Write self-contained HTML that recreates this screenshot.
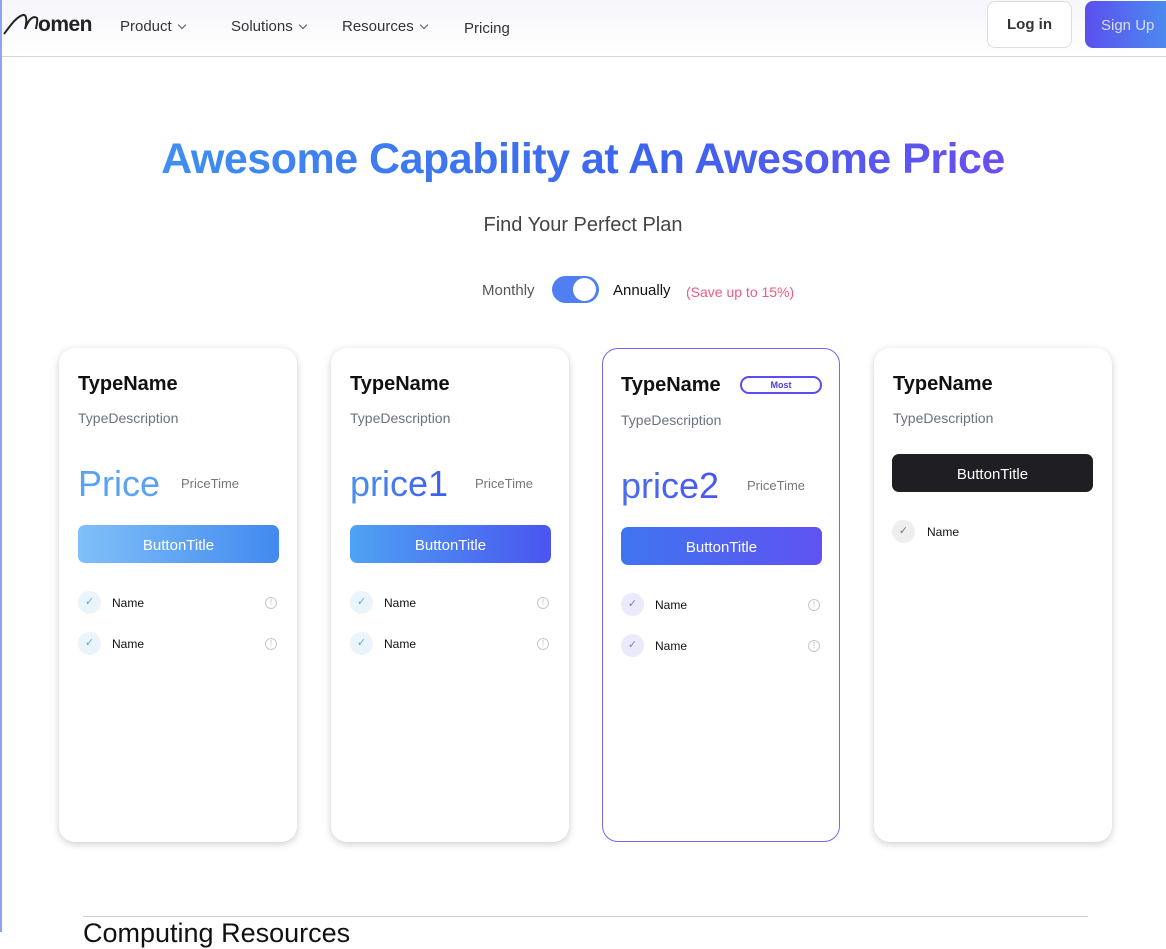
<!DOCTYPE html>
<html><head><meta charset="utf-8"><style>
*{margin:0;padding:0;box-sizing:border-box}
body{width:1166px;height:932px;overflow:hidden;background:#fff;font-family:"Liberation Sans",sans-serif;position:relative}
.abs{position:absolute}
.nav{position:absolute;left:0;top:0;width:1166px;height:57px;background:linear-gradient(#f6f6fb,#fff);border-bottom:1px solid #d4d4d8}
.navi{position:absolute;top:18px;font-size:15px;color:#333}
.chev{display:inline-block;width:6px;height:6px;border-right:1.5px solid #555;border-bottom:1.5px solid #555;transform:rotate(45deg);margin-left:7px;position:relative;top:-3px}
.card{position:absolute;top:348px;width:238px;height:494px;border-radius:16px;background:#fff;box-shadow:0 2px 8px rgba(0,0,0,.2)}
.tn{position:absolute;left:19px;top:25px;font-size:20px;font-weight:bold;color:#111}
.td{position:absolute;left:19px;top:62px;font-size:14px;color:#6b7280}
.pr{position:absolute;left:19px;top:116px;font-size:36px;line-height:40px}
.pt{position:absolute;top:128px;font-size:13px;color:#777}
.btn{position:absolute;left:19px;width:201px;height:38px;border-radius:7px;color:#fff;font-size:15px;text-align:center;line-height:42px}
.ck{position:absolute;left:19px;width:23px;height:23px;border-radius:50%;text-align:center;line-height:23px;font-size:11px}
.nm{position:absolute;left:53px;font-size:12px;color:#111}
.inf{position:absolute;left:206px;width:12px;height:12px;border:1px solid #c8c8cc;border-radius:50%;font-size:8px;color:#bbb;text-align:center;line-height:10px}
</style></head><body>
<div class="nav">
 <svg class="abs" style="left:2px;top:10px" width="38" height="26" viewBox="0 0 38 26"><path d="M2 24 C8 16 14 7 21 5 C25 4 25 12 23 19 M23 19 C26 10 31 5 35 8 C36 12 34 16 34 19" fill="none" stroke="#222" stroke-width="2"/></svg>
 <div class="abs" style="left:38px;top:13px;font-size:21px;color:#222;letter-spacing:-.5px;font-weight:bold">omen</div>
 <div class="navi" style="left:120px">Product<span class="chev"></span></div>
 <div class="navi" style="left:231px">Solutions<span class="chev"></span></div>
 <div class="navi" style="left:342px">Resources<span class="chev"></span></div>
 <div class="navi" style="left:464px;top:20px">Pricing</div>
 <div class="abs" style="left:987px;top:1px;width:85px;height:47px;border:1.5px solid #ddd;border-radius:8px;background:#fff;text-align:center;line-height:46px;font-size:15px;color:#333;font-weight:bold">Log in</div>
 <div class="abs" style="left:1085px;top:1px;width:90px;height:47px;border-radius:8px;background:linear-gradient(90deg,#5b50ee,#4a90f0);line-height:49px;padding-left:16px;font-size:15px;color:#dde">Sign Up</div>
</div>
<div class="abs" style="left:0;top:0;width:2px;height:932px;background:#8aa6f0"></div>
<div class="abs" style="left:0;width:1166px;top:135px;text-align:center;font-size:43px;font-weight:bold;letter-spacing:-.5px"><span style="background:linear-gradient(90deg,#3f8ff0,#3d63ee 60%,#6a4ff0);-webkit-background-clip:text;color:transparent">Awesome Capability at An Awesome Price</span></div>
<div class="abs" style="left:0;width:1166px;top:214px;text-align:center;font-size:20px;color:#444">Find Your Perfect Plan</div>
<div class="abs" style="left:482px;top:282px;font-size:15px;color:#555">Monthly</div>
<div class="abs" style="left:552px;top:276px;width:47px;height:27px;border-radius:14px;background:#4f7ff0"><div class="abs" style="left:21px;top:2px;width:23px;height:23px;border-radius:50%;background:#fff"></div></div>
<div class="abs" style="left:613px;top:282px;font-size:15px;color:#111">Annually</div>
<div class="abs" style="left:686px;top:284px;font-size:14px;color:#ee5a82">(Save up to 15%)</div>

<div class="card" style="left:59px">
 <div class="tn">TypeName</div><div class="td">TypeDescription</div>
 <div class="pr" style="color:#5aa2f2">Price</div><div class="pt" style="left:122px">PriceTime</div>
 <div class="btn" style="top:177px;background:linear-gradient(90deg,#80c0f8,#4289f0)">ButtonTitle</div>
 <div class="ck" style="top:243px;background:#eaf4fb;color:#5aa8e0">✓</div><div class="nm" style="top:248px">Name</div><div class="inf" style="top:249px">!</div>
 <div class="ck" style="top:284px;background:#eaf4fb;color:#5aa8e0">✓</div><div class="nm" style="top:289px">Name</div><div class="inf" style="top:290px">!</div>
</div>
<div class="card" style="left:331px">
 <div class="tn">TypeName</div><div class="td">TypeDescription</div>
 <div class="pr" style="background:linear-gradient(90deg,#4a90f0,#3d5cee);-webkit-background-clip:text;color:transparent">price1</div><div class="pt" style="left:144px">PriceTime</div>
 <div class="btn" style="top:177px;background:linear-gradient(90deg,#4ea2f4,#4a55ef)">ButtonTitle</div>
 <div class="ck" style="top:243px;background:#eaf4fb;color:#5aa8e0">✓</div><div class="nm" style="top:248px">Name</div><div class="inf" style="top:249px">!</div>
 <div class="ck" style="top:284px;background:#eaf4fb;color:#5aa8e0">✓</div><div class="nm" style="top:289px">Name</div><div class="inf" style="top:290px">!</div>
</div>
<div class="card" style="left:602px;width:238px;border:1px solid #7a65f0;box-shadow:none">
 <div class="tn" style="left:18px">TypeName</div>
 <div class="abs" style="left:137px;top:27px;width:82px;height:18px;border:2px solid #5a4ef0;border-radius:9px;text-align:center;font-size:9px;line-height:14px;color:#4a3ee0;font-weight:bold">Most</div>
 <div class="td" style="left:18px;top:63px">TypeDescription</div>
 <div class="pr" style="left:18px;top:117px;background:linear-gradient(90deg,#4a6ef0,#4a55ef);-webkit-background-clip:text;color:transparent">price2</div><div class="pt" style="left:144px;top:129px">PriceTime</div>
 <div class="btn" style="left:18px;top:178px;background:linear-gradient(90deg,#3f75f0,#6052f2)">ButtonTitle</div>
 <div class="ck" style="left:18px;top:244px;background:#ebeafa;color:#7a7ad0">✓</div><div class="nm" style="left:52px;top:249px">Name</div><div class="inf" style="left:205px;top:250px">!</div>
 <div class="ck" style="left:18px;top:285px;background:#ebeafa;color:#7a7ad0">✓</div><div class="nm" style="left:52px;top:290px">Name</div><div class="inf" style="left:205px;top:291px">!</div>
</div>
<div class="card" style="left:874px">
 <div class="tn">TypeName</div><div class="td">TypeDescription</div>
 <div class="btn" style="left:18px;top:106px;background:#1f1f23">ButtonTitle</div>
 <div class="ck" style="left:18px;top:172px;background:#eee;color:#777">✓</div><div class="nm" style="top:177px">Name</div>
</div>
<div class="abs" style="left:83px;top:916px;width:1005px;height:1px;background:#ccc"></div>
<div class="abs" style="left:83px;top:918px;font-size:27px;color:#111">Computing Resources</div>
</body></html>
